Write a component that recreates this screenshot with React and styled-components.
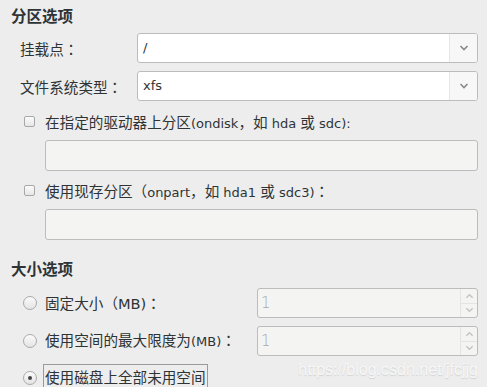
import React from 'react';
import styled, { createGlobalStyle } from 'styled-components';

const GlobalStyle = createGlobalStyle`
  html, body {
    margin: 0;
    padding: 0;
    background: #ededed;
  }
  body {
    font-family: "DejaVu Sans", "Noto Sans CJK SC", sans-serif;
    color: #2e3436;
    font-size: 14.6px;
  }
`;

const Page = styled.div`
  position: relative;
  width: 487px;
  height: 387px;
  overflow: hidden;
  padding: 8px 9px 0 11px;
  box-sizing: border-box;
`;

// latin runs are set smaller than the CJK glyphs, like the GTK font mix
const L = styled.span`
  font-size: 13px;
`;

// centred full-width colon
const Colon = styled.span`
  font-family: "Noto Sans CJK TC", sans-serif;
`;

const SectionTitle = styled.div`
  font-size: 15.5px;
  font-weight: bold;
  height: 18px;
  line-height: 18px;
  margin-top: ${p => p.top || 0}px;
`;

const FormGrid = styled.div`
  display: grid;
  grid-template-columns: 117px 1fr;
  row-gap: 8px;
  margin-top: 7px;
  padding-left: 9px;
  align-items: center;
`;

const Label = styled.div``;

const Select = styled.div`
  display: flex;
  height: 30px;
  box-sizing: border-box;
  border: 1px solid #bcbcbc;
  border-radius: 3px;
  background: #fff;
  overflow: hidden;
`;

const SelectValue = styled.div`
  flex: 1;
  padding-left: 5px;
  line-height: 28px;
  font-size: 13px;
`;

const SelectArrow = styled.div`
  width: 27px;
  border-left: 1px solid #e6e6e6;
  background: #f7f7f7;
  display: flex;
  align-items: center;
  justify-content: center;
`;

const CheckRow = styled.label`
  display: flex;
  align-items: center;
  gap: 10px;
  padding-left: 13px;
  height: 22px;
  margin-top: ${p => p.top || 0}px;
`;

const CheckBox = styled.span`
  flex: none;
  width: 9px;
  height: 9px;
  border: 1px solid #a8a8a8;
  border-radius: 2px;
  background: linear-gradient(#fbfbfb, #e6e6e6);
`;

const TextBox = styled.div`
  margin-left: 34px;
  margin-top: ${p => p.top || 0}px;
  height: 31px;
  box-sizing: border-box;
  border: 1px solid #bcbcbc;
  border-radius: 3px;
  background: #f4f4f3;
`;

const RadioList = styled.div`
  display: flex;
  flex-direction: column;
  row-gap: 8px;
  margin-top: 9px;
`;

const RadioRow = styled.div`
  display: grid;
  grid-template-columns: 234px 1fr;
  align-items: center;
  height: ${p => p.h || 30}px;
  padding-left: 12px;
`;

const RadioLabel = styled.label`
  display: flex;
  align-items: center;
  gap: 6px;
`;

const Radio = styled.span`
  flex: none;
  width: 12px;
  height: 12px;
  border: 1px solid #aaa;
  border-radius: 50%;
  background: linear-gradient(#fbfbfb, #e4e4e4);
  display: flex;
  align-items: center;
  justify-content: center;
  &::after {
    content: '';
    display: ${p => (p.checked ? 'block' : 'none')};
    width: 4px;
    height: 4px;
    border-radius: 50%;
    background: #444;
  }
`;

const RadioText = styled.span`
  border: 1px solid ${p => (p.focused ? '#9a9a9a' : 'transparent')};
  padding: 0 1px;
  line-height: ${p => (p.focused ? 25 : 20)}px;
`;

const Spin = styled.div`
  display: flex;
  height: 30px;
  box-sizing: border-box;
  border: 1px solid #bcbcbc;
  border-radius: 3px;
  background: #f4f4f3;
  overflow: hidden;
`;

const SpinValue = styled.div`
  flex: 1;
  padding-left: 3px;
  line-height: 28px;
  font-size: 15px;
  font-family: "DejaVu Sans", sans-serif;
  font-weight: 200;
  color: #a9a9a9;
`;

const SpinButtons = styled.div`
  width: 16px;
  border-left: 1px solid #e4e4e4;
  display: flex;
  flex-direction: column;
`;

const SpinButton = styled.div`
  flex: 1;
  display: flex;
  align-items: center;
  justify-content: center;
  & + & {
    border-top: 1px solid #e4e4e4;
  }
`;

const Watermark = styled.div`
  position: absolute;
  right: 9px;
  bottom: 8px;
  font-family: "Liberation Sans", Arial, sans-serif;
  font-size: 16px;
  color: #f7f7f7;
  text-shadow: 0 1px 1px #d0d0d0;
`;

const Chevron = ({ up, color = '#8a8a8a', w = 10 }) => (
  <svg width={w} height="6" viewBox="0 0 10 6">
    <path
      d={up ? 'M1.5 5 L5 1.5 L8.5 5' : 'M1.5 1 L5 4.5 L8.5 1'}
      fill="none"
      stroke={color}
      strokeWidth="1.6"
    />
  </svg>
);

const SelectField = ({ value }) => (
  <Select>
    <SelectValue>{value}</SelectValue>
    <SelectArrow>
      <Chevron />
    </SelectArrow>
  </Select>
);

const SpinField = ({ value }) => (
  <Spin>
    <SpinValue>{value}</SpinValue>
    <SpinButtons>
      <SpinButton>
        <Chevron up color="#c4c4c4" w={9} />
      </SpinButton>
      <SpinButton>
        <Chevron color="#c4c4c4" w={9} />
      </SpinButton>
    </SpinButtons>
  </Spin>
);

export default function App() {
  return (
    <Page>
      <GlobalStyle />
      <SectionTitle>分区选项</SectionTitle>
      <FormGrid>
        <Label>
          挂载点<Colon>：</Colon>
        </Label>
        <SelectField value="/" />
        <Label>
          文件系统类型<Colon>：</Colon>
        </Label>
        <SelectField value="xfs" />
      </FormGrid>
      <CheckRow top={9}>
        <CheckBox />
        <span>
          在指定的驱动器上分区<L>(ondisk</L>，如<L> hda </L>或<L> sdc):</L>
        </span>
      </CheckRow>
      <TextBox top={8} />
      <CheckRow top={8}>
        <CheckBox />
        <span>
          使用现存分区（<L>onpart</L>，如<L> hda1 </L>或<L> sdc3)</L>
          <Colon>：</Colon>
        </span>
      </CheckRow>
      <TextBox top={8} />
      <SectionTitle top={21}>大小选项</SectionTitle>
      <RadioList>
        <RadioRow>
          <RadioLabel>
            <Radio />
            <RadioText>
              固定大小（MB)<Colon>：</Colon>
            </RadioText>
          </RadioLabel>
          <SpinField value="1" />
        </RadioRow>
        <RadioRow>
          <RadioLabel>
            <Radio />
            <RadioText>
              使用空间的最大限度为<L>(MB)</L>
              <Colon>：</Colon>
            </RadioText>
          </RadioLabel>
          <SpinField value="1" />
        </RadioRow>
        <RadioRow h={26}>
          <RadioLabel>
            <Radio checked />
            <RadioText focused>使用磁盘上全部未用空间</RadioText>
          </RadioLabel>
        </RadioRow>
      </RadioList>
      <Watermark>https://blog.csdn.net/jfcjjg</Watermark>
    </Page>
  );
}
